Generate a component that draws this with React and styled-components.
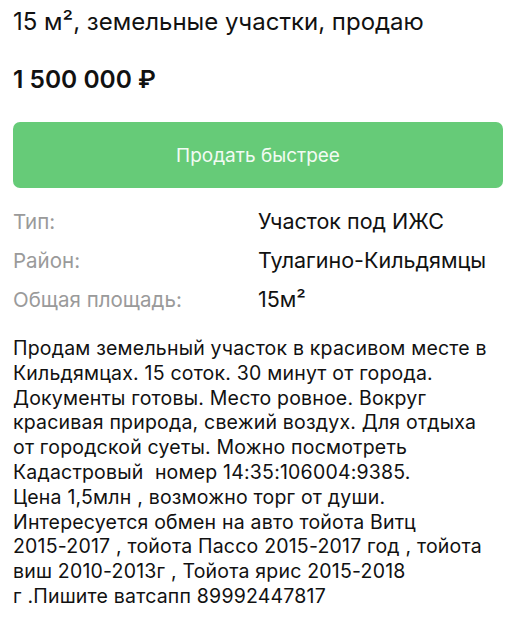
import React from "react";
import styled, { createGlobalStyle } from "styled-components";

const Global = createGlobalStyle`
  html, body { margin: 0; padding: 0; background: #fff; }
  body { font-family: Inter, "Noto Sans", sans-serif; color: #111; -webkit-font-smoothing: antialiased; }
`;

const Page = styled.div`
  width: 516px;
  height: 640px;
  overflow: hidden;
  padding: 0 13px;
  box-sizing: border-box;
  display: flex;
  flex-direction: column;
`;

const Title = styled.h1`
  margin: 6px 0 0;
  font-size: 24px;
  line-height: 32px;
  font-weight: 400;
  white-space: nowrap;
`;

const Price = styled.div`
  margin-top: 26px;
  font-size: 24.5px;
  line-height: 30px;
  font-weight: 600;
`;

const SellButton = styled.button`
  margin-top: 28px;
  height: 66px;
  width: 100%;
  border: none;
  border-radius: 7px;
  background: #66cb78;
  color: #f2fbf3;
  font-family: inherit;
  font-size: 19px;
  font-weight: 400;
`;

const Params = styled.dl`
  margin: 20px 0 0;
  display: grid;
  grid-template-columns: 245px 1fr;
  row-gap: 12px;
`;

const Label = styled.dt`
  color: #9a9a9a;
  font-size: 20.5px;
  line-height: 27px;
`;

const Value = styled.dd`
  margin: 0;
  color: #111;
  font-size: 21.5px;
  line-height: 27px;
`;

const Description = styled.p`
  margin: 23px 0 0;
  font-size: 19.5px;
  line-height: 24.8px;
  letter-spacing: 0.2px;
  white-space: pre-wrap;
`;

const desc = `Продам земельный участок в красивом месте в
Кильдямцах. 15 соток. 30 минут от города.
Документы готовы. Место ровное. Вокруг
красивая природа, свежий воздух. Для отдыха
от городской суеты. Можно посмотреть
Кадастровый  номер 14:35:106004:9385.
Цена 1,5млн , возможно торг от души.
Интересуется обмен на авто тойота Витц
2015-2017 , тойота Пассо 2015-2017 год , тойота
виш 2010-2013г , Тойота ярис 2015-2018
г .Пишите ватсапп 89992447817`;

const params = [
  ["Тип:", "Участок под ИЖС"],
  ["Район:", "Тулагино-Кильдямцы"],
  ["Общая площадь:", "15м²"],
];

export default function App() {
  return (
    <>
      <Global />
      <Page>
        <Title>15 м², земельные участки, продаю</Title>
        <Price>1 500 000 ₽</Price>
        <SellButton>Продать быстрее</SellButton>
        <Params>
          {params.map(([l, v]) => (
            <React.Fragment key={l}>
              <Label>{l}</Label>
              <Value>{v}</Value>
            </React.Fragment>
          ))}
        </Params>
        <Description>{desc}</Description>
      </Page>
    </>
  );
}
